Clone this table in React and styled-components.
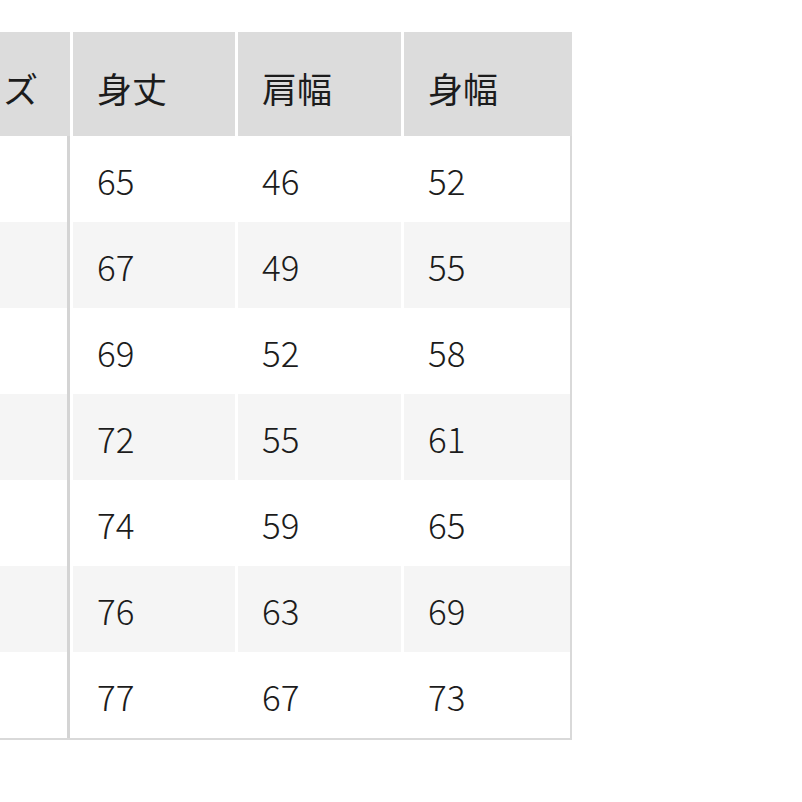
import React from "react";
import styled, { createGlobalStyle } from "styled-components";

const Global = createGlobalStyle`
  html, body { margin: 0; padding: 0; background: #ffffff; overflow: hidden; }
  body { font-family: "Noto Sans CJK JP", "Noto Sans", sans-serif; color: #1c1c1c; }
`;

const Page = styled.div`
  width: 802px;
  height: 802px;
  padding-top: 32px;
  box-sizing: border-box;
  overflow: hidden;
`;

const Table = styled.div`
  margin-left: -90px;
  width: 662px;
  display: flex;
  flex-direction: column;
`;

const HeaderRow = styled.div`
  display: grid;
  grid-template-columns: 160px 162px 163px 168px;
  column-gap: 3px;
  height: 104px;
`;

const HeadCell = styled.div`
  background: #dcdcdc;
  display: flex;
  align-items: center;
  padding: 7px 0 0 24px;
  box-sizing: border-box;
  font-size: 35px;
  font-weight: 400;
  line-height: 1;
  white-space: nowrap;
`;

const Body = styled.div`
  border-right: 2px solid #d9d9d9;
  border-bottom: 2px solid #d9d9d9;
  display: flex;
  flex-direction: column;
`;

const Row = styled.div`
  display: grid;
  grid-template-columns: 160px 162px 163px 1fr;
  column-gap: 3px;
  height: 86px;
`;

const Cell = styled.div`
  background: ${(p) => (p.$shade ? "#f5f5f5" : "#ffffff")};
  display: flex;
  align-items: center;
  padding: 0 0 0 24px;
  box-sizing: border-box;
  font-size: 35px;
  font-weight: 300;
  line-height: 1;
  ${(p) => (p.$first ? "border-right: 3px solid #d4d4d4;" : "")}
`;

const headers = ["サイズ", "身丈", "肩幅", "身幅"];
const rows = [
  ["XS", 65, 46, 52],
  ["S", 67, 49, 55],
  ["M", 69, 52, 58],
  ["L", 72, 55, 61],
  ["XL", 74, 59, 65],
  ["XXL", 76, 63, 69],
  ["3XL", 77, 67, 73],
];

export default function App() {
  return (
    <>
      <Global />
      <Page>
        <Table>
          <HeaderRow>
            {headers.map((h) => (
              <HeadCell key={h}>{h}</HeadCell>
            ))}
          </HeaderRow>
          <Body>
            {rows.map((r, i) => (
              <Row key={i}>
                <Cell $first $shade={i % 2 === 1}></Cell>
                {r.slice(1).map((v, j) => (
                  <Cell key={j} $shade={i % 2 === 1}>
                    {v}
                  </Cell>
                ))}
              </Row>
            ))}
          </Body>
        </Table>
      </Page>
    </>
  );
}
